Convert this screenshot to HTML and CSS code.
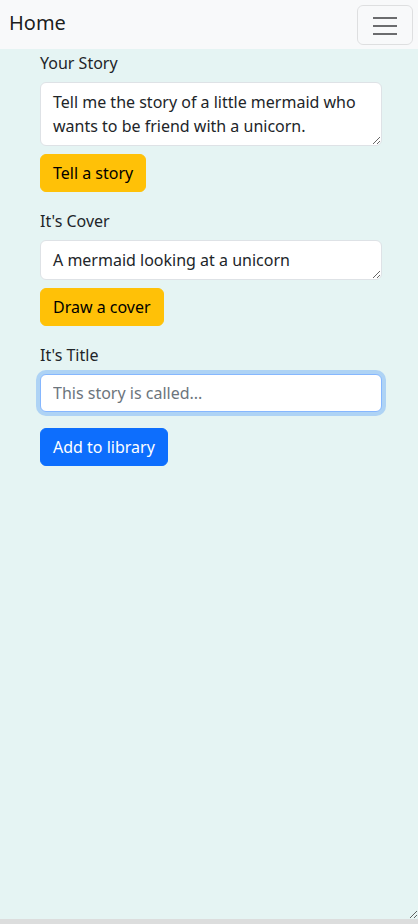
FILE: index.html
```html
<!DOCTYPE html>
<html lang="en">
<head>
<meta charset="utf-8">
<title>Home</title>
<link rel="stylesheet" href="styles.css">
</head>
<body>
<div class="frame">
  <nav class="navbar">
    <span class="brand">Home</span>
    <button class="toggler" type="button" aria-label="Toggle navigation">
      <svg width="26" height="20" viewBox="0 0 26 20"><path d="M1 3h24M1 11h24M1 19h24" stroke="#6b6c6e" stroke-width="2" fill="none"/></svg>
    </button>
  </nav>
  <main class="content">
    <label class="label" for="story">Your Story</label>
    <textarea id="story" class="control area-2">Tell me the story of a little mermaid who wants to be friend with a unicorn.</textarea>
    <button class="btn btn-warning" type="button">Tell a story</button>

    <label class="label section" for="cover">It's Cover</label>
    <textarea id="cover" class="control area-1">A mermaid looking at a unicorn</textarea>
    <button class="btn btn-warning" type="button">Draw a cover</button>

    <label class="label section" for="title">It's Title</label>
    <input id="title" class="control input focus" type="text" placeholder="This story is called...">
    <button class="btn btn-primary add" type="button">Add to library</button>
  </main>
</div>
</body>
</html>
```
FILE: styles.css
```css
html, body {
  margin: 0;
  padding: 0;
}
body {
  background: #dcdddd;
  font-family: "Noto Sans", "Liberation Sans", sans-serif;
  font-size: 16px;
  line-height: 1.5;
  color: #212529;
  height: 924px;
  overflow: hidden;
}
.frame {
  height: 919px;
  background: #e5f4f3;
  resize: vertical;
  overflow: auto;
}
.navbar {
  height: 49px;
  background: #f8f9fa;
  display: flex;
  align-items: center;
  justify-content: space-between;
  padding: 0 5px 4px 9px;
  box-sizing: border-box;
}
.brand {
  font-size: 20px;
  line-height: 30px;
  color: rgba(0,0,0,.9);
}
.toggler {
  width: 56px;
  height: 40px;
  margin-top: 5px;
  border: 1px solid rgba(0,0,0,.1);
  border-radius: 6px;
  background: transparent;
  display: flex;
  align-items: center;
  justify-content: center;
  padding: 0;
}
.content {
  display: flex;
  flex-direction: column;
  align-items: flex-start;
  padding: 2px 36px 0 40px;
}
.label {
  display: block;
  margin-bottom: 7px;
  line-height: 24px;
}
.label.section {
  margin-top: 17px;
}
.control {
  display: block;
  width: 100%;
  box-sizing: border-box;
  font-family: inherit;
  font-size: 16px;
  line-height: 24px;
  color: #212529;
  background: #fff;
  border: 1px solid #dee2e6;
  border-radius: 6px;
  padding: 6px 12px;
  margin: 0 0 8px 0;
  outline: none;
}
textarea.control {
  resize: vertical;
  padding-top: 7px;
}
.area-2 { height: 64px; }
.area-1 { height: 40px; }
.input { height: 38px; }
.focus {
  border-color: #86b7fe;
  box-shadow: 0 0 0 4px rgba(13,110,253,.25);
}
.control::placeholder {
  color: #6c757d;
}
.btn {
  font-family: inherit;
  font-size: 16px;
  line-height: 24px;
  padding: 6px 12px;
  border: 1px solid transparent;
  border-radius: 6px;
  height: 38px;
}
.btn-warning {
  background: #ffc107;
  border-color: #ffc107;
  color: #000;
}
.btn-primary {
  background: #0d6efd;
  border-color: #0d6efd;
  color: #fff;
}
.add {
  margin-top: 8px;
}
```
